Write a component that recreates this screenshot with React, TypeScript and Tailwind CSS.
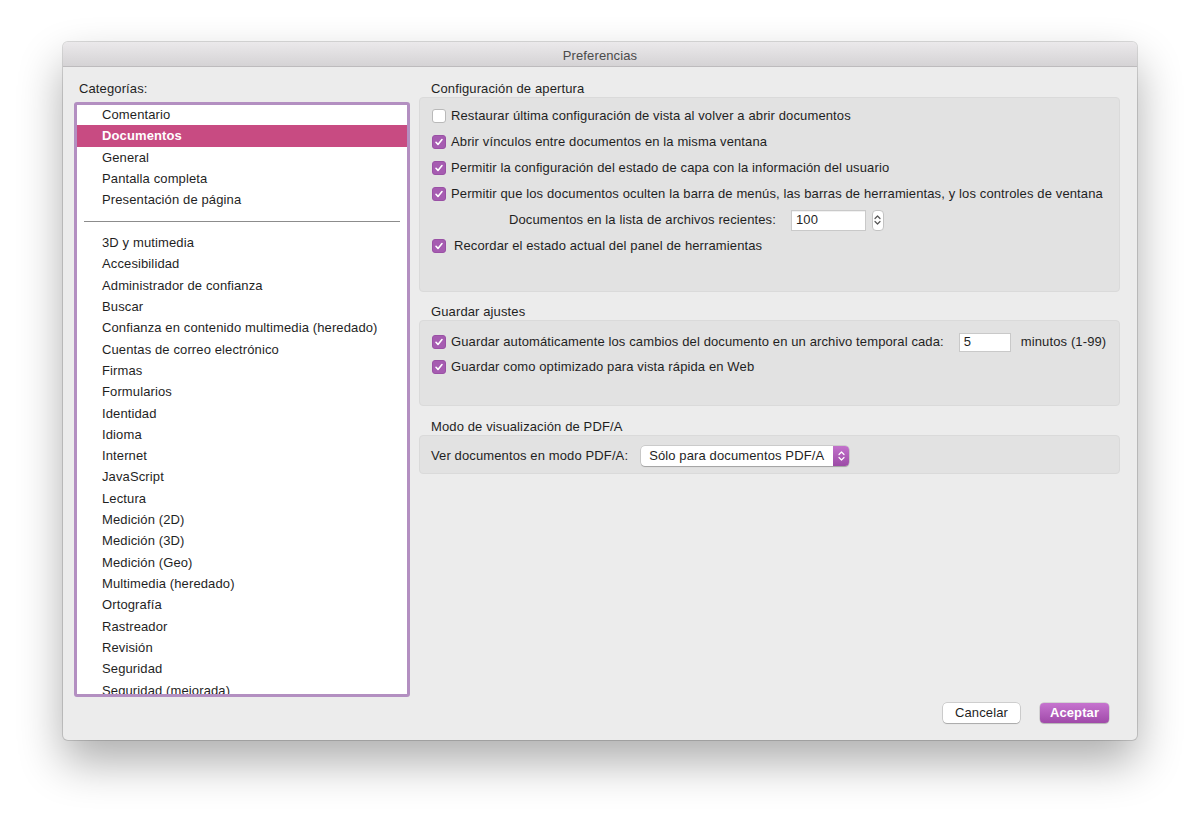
import React from "react";

const topCats = ["Comentario", "Documentos", "General", "Pantalla completa", "Presentación de página"];
const moreCats = [
  "3D y mutimedia",
  "Accesibilidad",
  "Administrador de confianza",
  "Buscar",
  "Confianza en contenido multimedia (heredado)",
  "Cuentas de correo electrónico",
  "Firmas",
  "Formularios",
  "Identidad",
  "Idioma",
  "Internet",
  "JavaScript",
  "Lectura",
  "Medición (2D)",
  "Medición (3D)",
  "Medición (Geo)",
  "Multimedia (heredado)",
  "Ortografía",
  "Rastreador",
  "Revisión",
  "Seguridad",
  "Seguridad (mejorada)",
];

function Check({ on = true }: { on?: boolean }) {
  if (!on)
    return <span className="inline-block w-[14px] h-[14px] shrink-0 rounded-[3px] bg-white border border-[#b9b9b9]" />;
  return (
    <span className="inline-flex items-center justify-center w-[14px] h-[14px] shrink-0 rounded-[3px] bg-[#a65cb1] border border-[#9a51a5]">
      <svg width="10" height="10" viewBox="0 0 10 10" fill="none">
        <path d="M2 5.3l2 2.1L8 2.6" stroke="white" strokeWidth="1.6" strokeLinecap="round" strokeLinejoin="round" />
      </svg>
    </span>
  );
}

function Row({ on, children, gap = "gap-[5px]" }: { on?: boolean; children: React.ReactNode; gap?: string }) {
  return (
    <div className={`flex items-center h-[26px] ${gap}`}>
      <Check on={on} />
      <span>{children}</span>
    </div>
  );
}

function Chevrons({ color = "#555" }: { color?: string }) {
  return (
    <svg width="7" height="12" viewBox="0 0 7 12" fill="none">
      <path d="M1 4.5L3.5 2 6 4.5" stroke={color} strokeWidth="1.2" strokeLinecap="round" strokeLinejoin="round" />
      <path d="M1 7.5L3.5 10 6 7.5" stroke={color} strokeWidth="1.2" strokeLinecap="round" strokeLinejoin="round" />
    </svg>
  );
}

export default function App() {
  return (
    <div
      className="w-[1200px] h-[823px] bg-white pt-[42px] pl-[63px] text-[13px] tracking-[0.12px] text-[#1f1f1f]"
      style={{ fontFamily: '"Helvetica Neue", "Liberation Sans", Arial, sans-serif' }}
    >
      <div className="w-[1074px] h-[698px] rounded-[5px] bg-[#ececec] flex flex-col overflow-hidden shadow-[0_22px_45px_rgba(0,0,0,0.32),0_0_0_1px_rgba(0,0,0,0.14)]">
        <div className="h-[25px] shrink-0 flex items-center justify-center pt-[3px] bg-gradient-to-b from-[#ebe9eb] to-[#d5d3d5] border-b border-[#bdbbbd] text-[#4b4b4b]">
          Preferencias
        </div>

        <div className="flex-1 flex pl-[11px] pr-[17px] pt-[13px]">
          <div className="w-[336px] flex flex-col">
            <div className="h-[17px] pl-[5px] leading-[17px] mb-[5px]">Categorías:</div>
            <div className="h-[595px] rounded-[3px] border-[3px] border-[#b38fc1] bg-white overflow-hidden">
              <div className="-mt-[1px]">
                {topCats.map((c) => (
                  <div
                    key={c}
                    className={`h-[21.33px] flex items-center pl-[25px] ${
                      c === "Documentos" ? "bg-[#c84b82] text-white font-semibold" : ""
                    }`}
                  >
                    {c}
                  </div>
                ))}
                <div className="h-[21.33px] flex items-center px-[7px]">
                  <div className="h-px w-full bg-[#8c8c8c]" />
                </div>
                {moreCats.map((c) => (
                  <div key={c} className="h-[21.33px] flex items-center pl-[25px]">
                    {c}
                  </div>
                ))}
              </div>
            </div>
          </div>

          <div className="ml-[9px] flex-1 flex flex-col">
            <div className="h-[17px] leading-[17px] pl-[12px]">Configuración de apertura</div>
            <div className="h-[195px] rounded-[4px] bg-[#e2e2e2] border border-[#dadada] pl-[12px] pt-[5px]">
              <Row on={false}>Restaurar última configuración de vista al volver a abrir documentos</Row>
              <Row>Abrir vínculos entre documentos en la misma ventana</Row>
              <Row>Permitir la configuración del estado de capa con la información del usuario</Row>
              <Row>
                Permitir que los documentos oculten la barra de menús, las barras de herramientas, y los controles de ventana
              </Row>
              <div className="flex items-center h-[26px] pl-[77px]">
                <span>Documentos en la lista de archivos recientes:</span>
                <div className="ml-[15px] w-[75px] h-[21px] bg-white border border-[#c9c9c9] shadow-[inset_0_1px_0_rgba(0,0,0,0.06)] flex items-center pl-[4px]">
                  100
                </div>
                <div className="ml-[6px] w-[12px] h-[21px] rounded-[4px] bg-white border border-[#c3c3c3] flex items-center justify-center">
                  <Chevrons />
                </div>
              </div>
              <Row gap="gap-[8px]">Recordar el estado actual del panel de herramientas</Row>
            </div>

            <div className="h-[17px] leading-[17px] pl-[12px] mt-[11px]">Guardar ajustes</div>
            <div className="h-[86px] rounded-[4px] bg-[#e2e2e2] border border-[#dadada] pl-[12px] pt-[8px]">
              <div className="flex items-center h-[26px] gap-[5px]">
                <Check />
                <span>Guardar automáticamente los cambios del documento en un archivo temporal cada:</span>
                <div className="ml-[10px] w-[52px] h-[19px] bg-white border border-[#c9c9c9] flex items-center pl-[4px]">
                  5
                </div>
                <span className="ml-[5px]">minutos (1-99)</span>
              </div>
              <div className="flex items-center h-[24px] gap-[5px]">
                <Check />
                <span>Guardar como optimizado para vista rápida en Web</span>
              </div>
            </div>

            <div className="h-[17px] leading-[17px] pl-[12px] mt-[12px]">Modo de visualización de PDF/A</div>
            <div className="h-[39px] rounded-[4px] bg-[#e2e2e2] border border-[#dadada] pl-[11px] pt-[3px] flex items-center">
              <span>Ver documentos en modo PDF/A:</span>
              <div className="ml-[13px] w-[208px] h-[20px] rounded-[4px] bg-white shadow-[0_0_0_0.5px_rgba(0,0,0,0.2),0_1px_1px_rgba(0,0,0,0.2)] flex overflow-hidden">
                <span className="flex-1 pl-[8px] leading-[20px]">Sólo para documentos PDF/A</span>
                <span className="w-[16px] bg-gradient-to-b from-[#c271cb] to-[#9c4ba6] flex items-center justify-center">
                  <Chevrons color="#fff" />
                </span>
              </div>
            </div>

            <div className="flex-1" />
            <div className="flex justify-end gap-[20px] pr-[11px] pb-[17px]">
              <div className="w-[77px] h-[20px] rounded-[4px] bg-white shadow-[0_0_0_0.5px_rgba(0,0,0,0.25),0_1px_1px_rgba(0,0,0,0.18)] flex items-center justify-center">
                Cancelar
              </div>
              <div className="w-[69px] h-[20px] rounded-[4px] bg-gradient-to-b from-[#c674cf] to-[#a04aa9] text-white font-semibold shadow-[0_0_0_0.5px_rgba(0,0,0,0.2),0_1px_1px_rgba(0,0,0,0.15)] flex items-center justify-center">
                Aceptar
              </div>
            </div>
          </div>
        </div>
      </div>
    </div>
  );
}
